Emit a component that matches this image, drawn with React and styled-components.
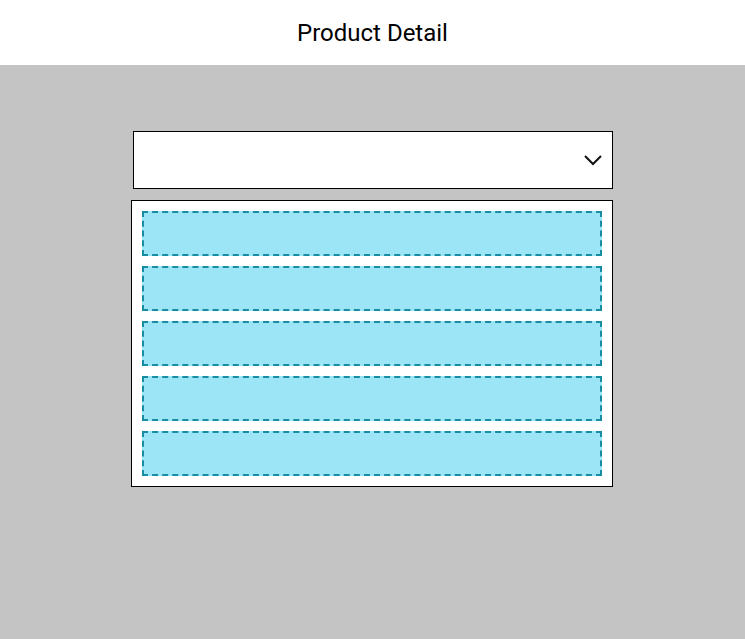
import React from 'react';
import styled, { createGlobalStyle } from 'styled-components';

const GlobalStyle = createGlobalStyle`
  html, body {
    margin: 0;
    padding: 0;
    height: 100%;
    font-family: Roboto, "Liberation Sans", sans-serif;
  }
  #root {
    min-height: 100vh;
    display: flex;
    flex-direction: column;
  }
`;

const Header = styled.header`
  height: 65px;
  background: #ffffff;
  display: flex;
  align-items: center;
  justify-content: center;
  font-size: 24px;
  color: #000;
  padding-top: 1px;
  box-sizing: border-box;
`;

const Main = styled.main`
  flex: 1;
  background: #c4c4c4;
  display: flex;
  flex-direction: column;
  align-items: center;
  padding: 66px 2px 0 0;
`;

const Select = styled.div`
  box-sizing: border-box;
  width: 480px;
  height: 58px;
  margin-left: 3px;
  background: #fff;
  border: 1px solid #000;
  display: flex;
  align-items: center;
  justify-content: flex-end;
  padding-right: 9px;
`;

const List = styled.div`
  box-sizing: border-box;
  width: 482px;
  margin-top: 11px;
  background: #fff;
  border: 1px solid #000;
  padding: 10px;
  display: flex;
  flex-direction: column;
  gap: 10px;
`;

const Item = styled.div`
  box-sizing: border-box;
  height: 45px;
  background: #9be5f6;
  border: 2px dashed #178ca3;
`;

const Chevron = () => (
  <svg width="20" height="14" viewBox="0 0 20 14">
    <path d="M2 3 L10 11 L18 3" fill="none" stroke="#111" strokeWidth="2" />
  </svg>
);

const App = () => (
  <>
    <GlobalStyle />
    <Header>Product Detail</Header>
    <Main>
      <Select>
        <Chevron />
      </Select>
      <List>
        {[0, 1, 2, 3, 4].map((i) => (
          <Item key={i} />
        ))}
      </List>
    </Main>
  </>
);

export default App;
